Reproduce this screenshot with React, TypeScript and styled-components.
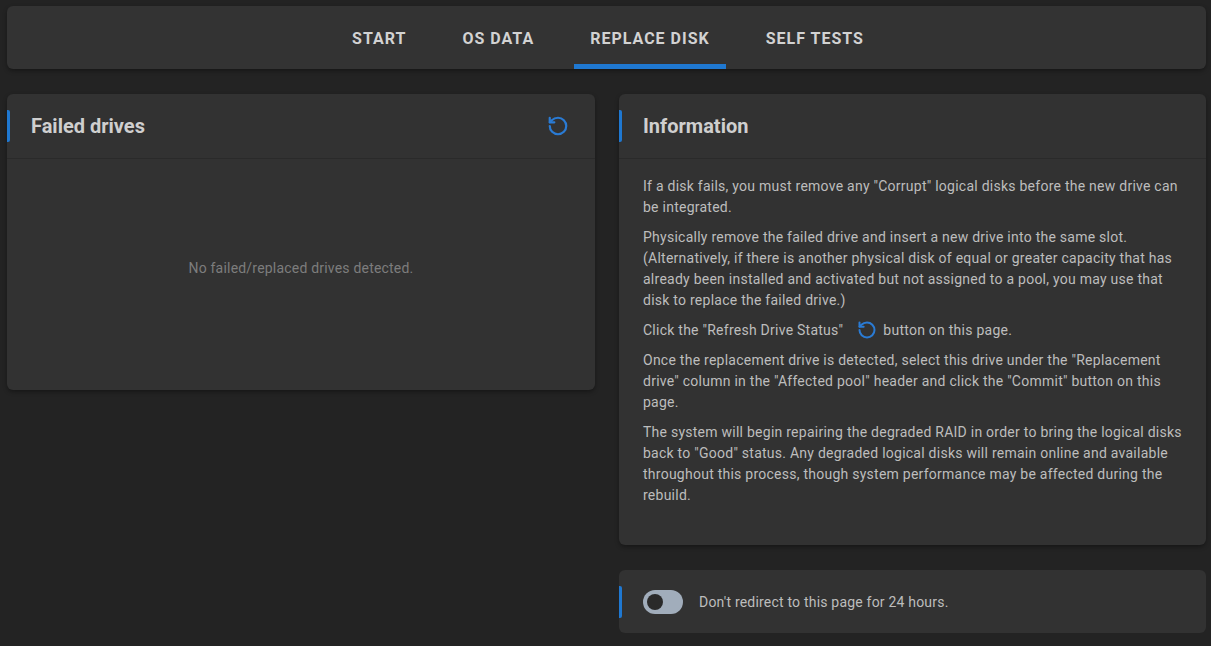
import React, { useState } from "react";
import styled, { createGlobalStyle } from "styled-components";
import { RotateCcw } from "lucide-react";

const GlobalStyle = createGlobalStyle`
  body {
    margin: 0;
    background: #232323;
    font-family: Roboto, "Liberation Sans", sans-serif;
  }
`;

const tabs = ["START", "OS DATA", "REPLACE DISK", "SELF TESTS"];

const App = () => {
  const [active, setActive] = useState(2);
  const [redirectOff, setRedirectOff] = useState(false);

  return (
    <>
      <GlobalStyle />
      <StPage>
        <StNav>
          {tabs.map((t, i) => (
            <StTab key={t} active={i === active} onClick={() => setActive(i)}>
              {t}
            </StTab>
          ))}
        </StNav>
        <StGrid>
          <StCard>
            <StCardHeader>
              <StTitle>Failed drives</StTitle>
              <StIconBtn>
                <RotateCcw size={22} color="#2a7bd4" strokeWidth={2.4} />
              </StIconBtn>
            </StCardHeader>
            <StEmpty>No failed/replaced drives detected.</StEmpty>
          </StCard>
          <StColumn>
            <StCard>
              <StCardHeader>
                <StTitle>Information</StTitle>
              </StCardHeader>
              <StBody>
                <p>
                  If a disk fails, you must remove any "Corrupt" logical disks
                  before the new drive can be integrated.
                </p>
                <p>
                  Physically remove the failed drive and insert a new drive into
                  the same slot. (Alternatively, if there is another physical
                  disk of equal or greater capacity that has already been
                  installed and activated but not assigned to a pool, you may
                  use that disk to replace the failed drive.)
                </p>
                <p>
                  Click the "Refresh Drive Status"
                  <StInlineIcon>
                    <RotateCcw size={20} color="#2a7bd4" strokeWidth={2.4} />
                  </StInlineIcon>
                  button on this page.
                </p>
                <p>
                  Once the replacement drive is detected, select this drive
                  under the "Replacement drive" column in the "Affected pool"
                  header and click the "Commit" button on this page.
                </p>
                <p>
                  The system will begin repairing the degraded RAID in order to
                  bring the logical disks back to "Good" status. Any degraded
                  logical disks will remain online and available throughout this
                  process, though system performance may be affected during the
                  rebuild.
                </p>
              </StBody>
            </StCard>
            <StToggleCard>
              <StSwitch on={redirectOff} onClick={() => setRedirectOff((p) => !p)}>
                <StKnob on={redirectOff} />
              </StSwitch>
              <StToggleLabel>Don't redirect to this page for 24 hours.</StToggleLabel>
            </StToggleCard>
          </StColumn>
        </StGrid>
      </StPage>
    </>
  );
};

export default App;

const StPage = styled.div`
  padding: 6px 5px 6px 7px;
  display: flex;
  flex-direction: column;
  gap: 25px;
`;

const StNav = styled.nav`
  display: flex;
  justify-content: center;
  gap: 24px;
  height: 63px;
  background: #333333;
  border-radius: 6px;
  box-shadow: 0 2px 4px rgba(0, 0, 0, 0.35);
  padding-left: 3px;
`;

const StTab = styled.button<{ active: boolean }>`
  background: none;
  border: none;
  border-bottom: 5px solid ${({ active }) => (active ? "#1f78d1" : "transparent")};
  padding: 6px 16px 0;
  height: 63px;
  font-family: Roboto, "Liberation Sans", sans-serif;
  font-size: 16px;
  font-weight: 700;
  letter-spacing: 1px;
  color: #d2d2d2;
  cursor: pointer;
`;

const StGrid = styled.div`
  display: grid;
  grid-template-columns: 588px 587px;
  gap: 24px;
  align-items: start;
`;

const StColumn = styled.div`
  display: flex;
  flex-direction: column;
  gap: 25px;
`;

const StCard = styled.section`
  background: #323232;
  border-radius: 6px;
  box-shadow: 0 2px 4px rgba(0, 0, 0, 0.35);
`;

const StCardHeader = styled.div`
  position: relative;
  height: 64px;
  display: flex;
  align-items: center;
  justify-content: space-between;
  padding: 0 26px 0 24px;
  border-bottom: 1px solid #2a2a2a;
  &::before {
    content: "";
    position: absolute;
    left: 0;
    top: 16px;
    width: 3px;
    height: 32px;
    background: #1f78d1;
    border-radius: 0 2px 2px 0;
  }
`;

const StTitle = styled.h2`
  margin: 0;
  font-size: 20px;
  font-weight: 700;
  color: #cfcfcf;
`;

const StIconBtn = styled.button`
  background: none;
  border: none;
  padding: 0;
  display: flex;
  cursor: pointer;
`;

const StEmpty = styled.div`
  height: 217px;
  padding-bottom: 14px;
  display: flex;
  align-items: center;
  justify-content: center;
  font-size: 14px;
  letter-spacing: 0.2px;
  color: #7d7d7d;
`;

const StBody = styled.div`
  padding: 17px 24px 30px;
  font-size: 14px;
  line-height: 21px;
  letter-spacing: 0.25px;
  color: #bdbdbd;
  p {
    margin: 0 0 9px;
  }
`;

const StInlineIcon = styled.span`
  display: inline-flex;
  vertical-align: -5px;
  margin: 0 6px 0 14px;
`;

const StToggleCard = styled.div`
  position: relative;
  height: 63px;
  background: #323232;
  border-radius: 6px;
  display: flex;
  align-items: center;
  gap: 16px;
  padding-left: 24px;
  &::before {
    content: "";
    position: absolute;
    left: 0;
    top: 16px;
    width: 3px;
    height: 32px;
    background: #1f78d1;
    border-radius: 0 2px 2px 0;
  }
`;

const StSwitch = styled.div<{ on: boolean }>`
  width: 40px;
  height: 24px;
  border-radius: 12px;
  background: ${({ on }) => (on ? "#1f78d1" : "#a1adbb")};
  display: flex;
  align-items: center;
  padding: 0 4px;
  box-sizing: border-box;
  cursor: pointer;
`;

const StKnob = styled.div<{ on: boolean }>`
  width: 16px;
  height: 16px;
  border-radius: 50%;
  background: #2a2a2a;
  margin-left: ${({ on }) => (on ? "16px" : "0")};
`;

const StToggleLabel = styled.span`
  font-size: 14px;
  letter-spacing: 0.2px;
  color: #bdbdbd;
`;
